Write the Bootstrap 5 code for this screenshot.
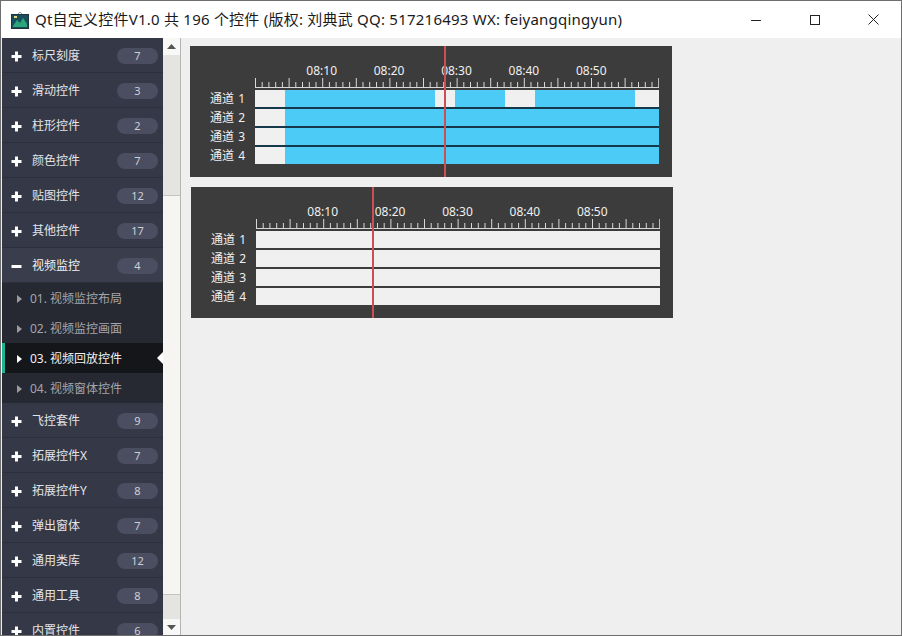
<!DOCTYPE html>
<html lang="zh-CN">
<head>
    <meta charset="UTF-8">
    <meta name="viewport" content="width=device-width, initial-scale=1.0">
    <title>Qt自定义控件</title>
    <link href="https://cdn.jsdelivr.net/npm/bootstrap@5.3.0/dist/css/bootstrap.min.css" rel="stylesheet">
    <style>
        body { margin: 0; background: #efefef; font-family: "Noto Sans", "Noto Sans CJK SC", sans-serif; font-size: 12px; }
        .app-window { width: 902px; height: 636px; border: 1px solid #6e6e6e; overflow: hidden; background: #efefef; }

        /* title bar */
        .title-bar { height: 37px; background: #fff; color: #1a1a1a; font-size: 15px; flex: none; }
        .title-text { letter-spacing: .23px; padding-bottom: 1px; }
        .title-icon { margin: 0 6px 0 10px; }
        .win-btn { width: 58px; height: 37px; }
        .win-shift { padding-left: 2px; }

        /* left menu */
        .app-body { height: 598px; }
        .side-menu { width: 161px; margin-left: 1px; flex: none; overflow: hidden; border-radius: 0; flex-wrap: nowrap; }
        .side-menu .list-group-item { border: 0; border-radius: 0; color: #e4e4e8; padding: 0; font-size: 12px; flex: none; margin: 0; }
        .side-menu .group-row { height: 35px; background: #353846; box-shadow: inset 0 -1px 0 #2d2f3b; padding: 1px 5px 0 9px; }
        .side-menu .group-row svg { margin-right: 10px; flex: none; }
        .side-menu .group-open { background: #3a3d4b; color: #f2f2f2; }
        .group-count { width: 41px; height: 16px; line-height: 16px; background: #4b4e61; color: #cfd0d6; font-size: 11px; font-weight: 400; padding: 0; }
        .side-menu .child-row { height: 30px; background: #272932; color: #a4a5aa; padding: 1px 0 0 15px; position: relative; }
        .side-menu .child-row svg { margin-right: 8px; flex: none; }
        .side-menu .child-active { background: #15161a; color: #f2f2f2; box-shadow: inset 3px 0 0 #1fb394; }
        .child-active::after { content: ""; position: absolute; right: 0; top: 9px; border: 6px solid transparent; border-right-color: #fff; border-left-width: 0; }

        /* scroll bar */
        .side-scroll { width: 18px; flex: none; background: #e6e4e0; border-right: 1px solid #b4b4b4; }
        .scroll-btn { height: 17px; background: #f8f8f6; flex: none; }
        .scroll-up { height: 140px; flex: none; }
        .scroll-thumb { background: #f6f5f2; border-top: 1px solid #c4c4c0; border-bottom: 1px solid #c4c4c0; height: 400px; flex: none; }

        /* timeline */
        .time-area { padding: 8px 0 0 9px; gap: 10px; }
        .time-box { width: 482px; height: 131px; background: #3c3c3c; position: relative; color: #f0f0f0; }
        .time-box-second { margin-left: 1px; }
        .time-ruler { margin-left: 65px; width: 404px; height: 44px; padding-top: 18px; }
        .time-marks { padding-left: 33px; height: 14px; line-height: 14px; }
        .time-marks span { width: 67.4px; text-align: center; flex: none; }
        .time-ruler svg { display: block; }
        .track-list { gap: 2px; }
        .track-row { height: 17px; }
        .track-name { width: 55px; text-align: right; flex: none; margin-right: 10px; line-height: 17px; word-spacing: 1px; }
        .track-bar { width: 404px; background: #f0f0f0; }
        .track-on { background: #4bcbf6; }
        .track-off { background: #f0f0f0; }
        .time-box-first .track-row:not(:last-child) .track-bar { box-shadow: 0 2px 0 #15394a; }
        .time-now { position: absolute; top: 0; bottom: 0; width: 2px; background: #cd4f55; }
    </style>
</head>
<body>
    <div class="app-window d-flex flex-column">

        <div class="title-bar d-flex align-items-center">
            <svg class="title-icon" width="18" height="18" viewBox="0 0 18 18">
                <path d="M6 4 L9 1 L12 4" fill="none" stroke="#8a9aa0" stroke-width="1"/>
                <rect x="0.5" y="3.5" width="17" height="14" fill="#17505c" stroke="#21323a"/>
                <path d="M2 15 L6 9 L9 12 L12 7 L16 13 V16 H2 Z" fill="#2aa57c"/>
                <rect x="3" y="5" width="3" height="2" fill="#e8d878"/>
            </svg>
            <span class="title-text flex-grow-1">Qt自定义控件V1.0 共 196 个控件 (版权: 刘典武 QQ: 517216493 WX: feiyangqingyun)</span>
            <div class="win-btn d-flex align-items-center justify-content-center">
                <svg width="10" height="10" viewBox="0 0 10 10"><path d="M0 5.5 H10" stroke="#222" fill="none"/></svg>
            </div>
            <div class="win-btn win-shift d-flex align-items-center justify-content-center">
                <svg width="10" height="10" viewBox="0 0 10 10"><rect x="0.5" y="0.5" width="9" height="9" stroke="#222" fill="none"/></svg>
            </div>
            <div class="win-btn win-shift d-flex align-items-center justify-content-center">
                <svg width="11" height="11" viewBox="0 0 11 11"><path d="M0.5 0.5 L10.5 10.5 M10.5 0.5 L0.5 10.5" stroke="#222" fill="none"/></svg>
            </div>
        </div>

        <div class="app-body d-flex">
            <div class="side-menu list-group" id="sideMenu"></div>

            <div class="side-scroll d-flex flex-column">
                <div class="scroll-btn d-flex align-items-center justify-content-center">
                    <svg width="9" height="5" viewBox="0 0 9 5"><path d="M4.5 0 L9 5 H0 Z" fill="#555"/></svg>
                </div>
                <div class="scroll-up"></div>
                <div class="scroll-thumb"></div>
                <div class="flex-grow-1"></div>
                <div class="scroll-btn d-flex align-items-center justify-content-center">
                    <svg width="9" height="5" viewBox="0 0 9 5"><path d="M4.5 5 L9 0 H0 Z" fill="#555"/></svg>
                </div>
            </div>

            <div class="time-area flex-grow-1 d-flex flex-column" id="timeArea"></div>
        </div>
    </div>

<script>
    // 左侧菜单数据
    const menus = [
        ["标尺刻度", 7], ["滑动控件", 3], ["柱形控件", 2], ["颜色控件", 7], ["贴图控件", 12], ["其他控件", 17],
        ["视频监控", 4, ["01. 视频监控布局", "02. 视频监控画面", "03. 视频回放控件", "04. 视频窗体控件"]],
        ["飞控套件", 9], ["拓展控件X", 7], ["拓展控件Y", 8], ["弹出窗体", 7], ["通用类库", 12], ["通用工具", 8], ["内置控件", 6]
    ];
    const plusIcon = '<svg width="11" height="11" viewBox="0 0 11 11"><path d="M5.5 0.5 V10.5 M0.5 5.5 H10.5" stroke="#fff" stroke-width="3" fill="none"/></svg>';
    const minusIcon = '<svg width="11" height="11" viewBox="0 0 11 11"><path d="M0.5 5.5 H10.5" stroke="#fff" stroke-width="3" fill="none"/></svg>';

    let menuHtml = "";
    menus.forEach(function(m) {
        menuHtml += '<div class="list-group-item group-row d-flex align-items-center' + (m[2] ? " group-open" : "") + '">'
            + (m[2] ? minusIcon : plusIcon)
            + '<span class="flex-grow-1">' + m[0] + '</span>'
            + '<span class="badge rounded-pill group-count">' + m[1] + '</span></div>';
        (m[2] || []).forEach(function(name, i) {
            const color = i == 2 ? "#fff" : "#9a9ba0";
            menuHtml += '<div class="list-group-item child-row d-flex align-items-center' + (i == 2 ? " child-active" : "") + '">'
                + '<svg width="5" height="8" viewBox="0 0 5 8"><path d="M0 0 L5 4 L0 8 Z" fill="' + color + '"/></svg>'
                + '<span>' + name + '</span></div>';
        });
    });
    document.getElementById("sideMenu").innerHTML = menuHtml;

    // 刻度线
    function rulerSvg() {
        let d = "M0 9.5 H404";
        for (let i = 0; i <= 60; i++) {
            const x = (0.5 + i * 6.72).toFixed(1);
            d += " M" + x + (i % 5 == 0 ? " 0" : " 4") + " V10";
        }
        return '<svg width="404" height="12" viewBox="0 0 404 12"><path d="' + d + '" stroke="#d8d8d8" stroke-width="1" fill="none"/></svg>';
    }

    // 回放控件, segs 为每一段的 [宽度, 是否有录像]
    function timeBox(nowX, second, tracks) {
        let html = '<div class="time-box ' + (second ? "time-box-second" : "time-box-first") + '"><div class="time-ruler">'
            + '<div class="time-marks d-flex">';
        ["08:10", "08:20", "08:30", "08:40", "08:50"].forEach(function(t) { html += "<span>" + t + "</span>"; });
        html += "</div>" + rulerSvg() + '</div><div class="track-list d-flex flex-column">';
        tracks.forEach(function(segs, i) {
            html += '<div class="track-row d-flex"><div class="track-name">通道 ' + (i + 1) + '</div><div class="track-bar d-flex">';
            segs.forEach(function(s) {
                html += '<div class="' + (s[1] ? "track-on" : "track-off") + '" style="width:' + s[0] + 'px"></div>';
            });
            html += "</div></div>";
        });
        html += '</div><div class="time-now" style="left:' + nowX + 'px"></div></div>';
        return html;
    }

    const full = [[30, 0], [374, 1]];
    const empty = [[404, 0]];
    document.getElementById("timeArea").innerHTML =
        timeBox(254, false, [[[30, 0], [150, 1], [20, 0], [50, 1], [30, 0], [100, 1], [24, 0]], full, full, full])
        + timeBox(181, true, [empty, empty, empty, empty]);
</script>

<script src="https://cdn.jsdelivr.net/npm/bootstrap@5.3.0/dist/js/bootstrap.bundle.min.js"></script>
</body>
</html>
